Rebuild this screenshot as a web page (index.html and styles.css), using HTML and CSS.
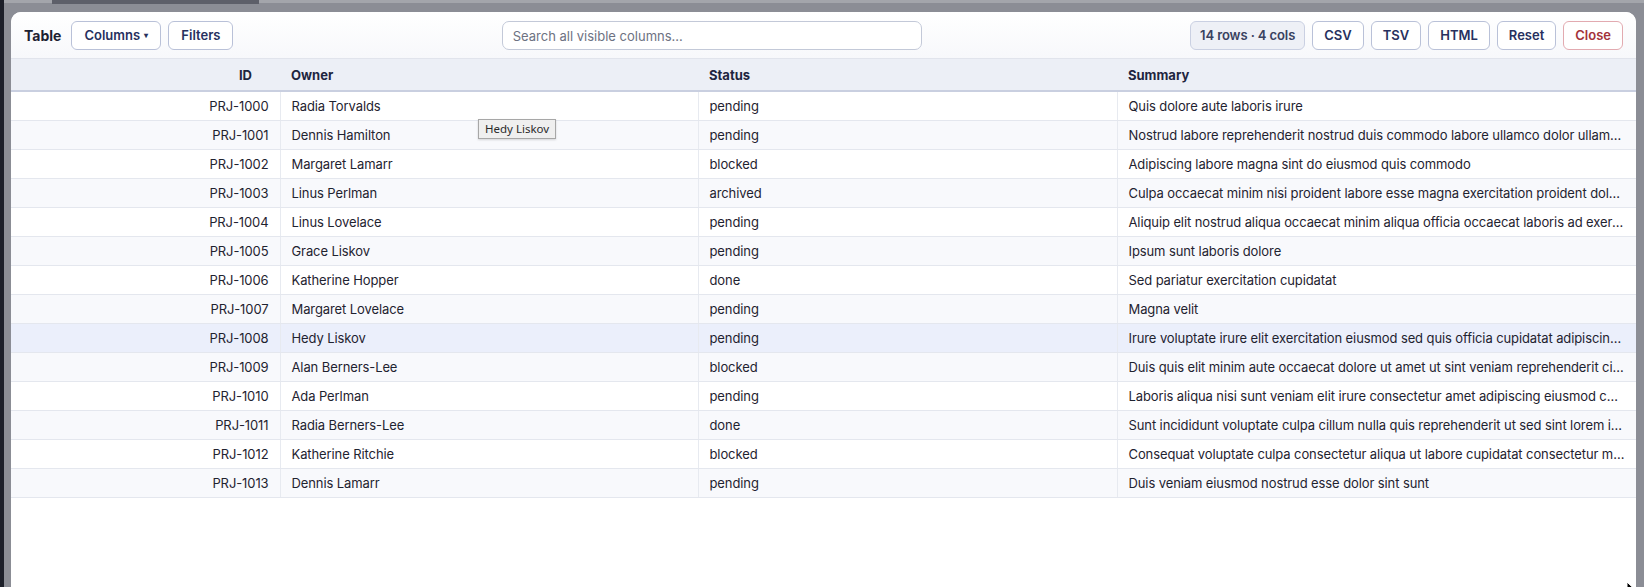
FILE: index.html
```html
<!DOCTYPE html>
<html lang="en">
<head>
<meta charset="utf-8">
<title>Table</title>
<link rel="stylesheet" href="styles.css">
</head>
<body>
<div class="topstrip"><span class="topbar"></span></div>
<div class="leftedge"></div>
<div class="modal">
  <div class="toolbar">
    <div class="group">
      <span class="title">Table</span>
      <button class="btn wide">Columns <span class="caret">▾</span></button>
      <button class="btn wide">Filters</button>
    </div>
    <div class="center">
      <input class="search" type="text" placeholder="Search all visible columns...">
    </div>
    <div class="group">
      <span class="badge">14 rows · 4 cols</span>
      <button class="btn">CSV</button>
      <button class="btn">TSV</button>
      <button class="btn">HTML</button>
      <button class="btn">Reset</button>
      <button class="btn danger">Close</button>
    </div>
  </div>
  <div class="tablewrap">
    <table class="grid">
      <colgroup>
        <col class="c-id"><col class="c-owner"><col class="c-status"><col>
      </colgroup>
      <thead>
        <tr><th class="num">ID<span class="sortspace"></span></th><th>Owner</th><th>Status</th><th>Summary</th></tr>
      </thead>
      <tbody>
        <tr><td class="num">PRJ-1000</td><td>Radia Torvalds</td><td>pending</td><td>Quis dolore aute laboris irure</td></tr>
        <tr><td class="num">PRJ-1001</td><td>Dennis Hamilton</td><td>pending</td><td>Nostrud labore reprehenderit nostrud duis commodo labore ullamco dolor ullamco sint magna</td></tr>
        <tr><td class="num">PRJ-1002</td><td>Margaret Lamarr</td><td>blocked</td><td>Adipiscing labore magna sint do eiusmod quis commodo</td></tr>
        <tr><td class="num">PRJ-1003</td><td>Linus Perlman</td><td>archived</td><td>Culpa occaecat minim nisi proident labore esse magna exercitation proident dolore anim velit</td></tr>
        <tr><td class="num">PRJ-1004</td><td>Linus Lovelace</td><td>pending</td><td>Aliquip elit nostrud aliqua occaecat minim aliqua officia occaecat laboris ad exercitation quis</td></tr>
        <tr><td class="num">PRJ-1005</td><td>Grace Liskov</td><td>pending</td><td>Ipsum sunt laboris dolore</td></tr>
        <tr><td class="num">PRJ-1006</td><td>Katherine Hopper</td><td>done</td><td>Sed pariatur exercitation cupidatat</td></tr>
        <tr><td class="num">PRJ-1007</td><td>Margaret Lovelace</td><td>pending</td><td>Magna velit</td></tr>
        <tr class="hover"><td class="num">PRJ-1008</td><td>Hedy Liskov</td><td>pending</td><td>Irure voluptate irure elit exercitation eiusmod sed quis officia cupidatat adipiscing nulla</td></tr>
        <tr><td class="num">PRJ-1009</td><td>Alan Berners-Lee</td><td>blocked</td><td>Duis quis elit minim aute occaecat dolore ut amet ut sint veniam reprehenderit cillum esse</td></tr>
        <tr><td class="num">PRJ-1010</td><td>Ada Perlman</td><td>pending</td><td>Laboris aliqua nisi sunt veniam elit irure consectetur amet adipiscing eiusmod culpa sunt</td></tr>
        <tr><td class="num">PRJ-1011</td><td>Radia Berners-Lee</td><td>done</td><td>Sunt incididunt voluptate culpa cillum nulla quis reprehenderit ut sed sint lorem ipsum dolor</td></tr>
        <tr><td class="num">PRJ-1012</td><td>Katherine Ritchie</td><td>blocked</td><td>Consequat voluptate culpa consectetur aliqua ut labore cupidatat consectetur mollit anim</td></tr>
        <tr><td class="num">PRJ-1013</td><td>Dennis Lamarr</td><td>pending</td><td>Duis veniam eiusmod nostrud esse dolor sint sunt</td></tr>
      </tbody>
    </table>
  </div>
  <div class="tooltip">Hedy Liskov</div>
</div>
<svg class="cursor" width="12" height="18" viewBox="0 0 12 18"><path d="M1 1 L1 15 L4.5 11.5 L7 17 L9 16 L6.5 10.5 L11 10.5 Z" fill="#000" stroke="#fff" stroke-width="1"/></svg>
</body>
</html>
```

FILE: styles.css
```css
* { box-sizing: border-box; }
html, body { margin: 0; height: 100%; overflow: hidden; }
body {
  background: #8b8d95;
  font-family: Inter, "Noto Sans", "Liberation Sans", sans-serif;
  color: #1f2330;
  padding: 12px 8px 0 11px;
  position: relative;
}
.topstrip {
  position: absolute;
  left: 0; top: 0; right: 0;
  height: 3px;
  background: #a3a5ab;
}
.topbar {
  position: absolute;
  left: 52px; top: 0;
  width: 207px; height: 4px;
  background: #5d5f69;
}
.leftedge {
  position: absolute;
  left: 0; top: 0; bottom: 0;
  width: 4px;
  background: #1c1f29;
}
.modal {
  position: relative;
  background: #fff;
  border-radius: 10px 10px 0 0;
  height: calc(100% + 20px);
  overflow: hidden;
}
.toolbar {
  display: flex;
  align-items: center;
  height: 47px;
  padding: 1px 13px 0 13px;
  background: linear-gradient(#ffffff, #f7f8fb);
  border-bottom: 1px solid #e1e4ec;
}
.group { display: flex; align-items: center; gap: 7px; }
.title {
  font-size: 14px;
  font-weight: 700;
  color: #1d2131;
  margin-right: 3px;
}
.btn {
  font-family: inherit;
  font-size: 13px;
  font-weight: 600;
  color: #27305e;
  background: #fff;
  border: 1px solid #b9c1d8;
  border-radius: 6px;
  height: 29px;
  padding: 0 11px;
  line-height: 27px;
}
.btn.wide { padding: 0 12px; }
.caret { font-size: 8px; vertical-align: 2px; margin-left: 1px; }
.btn.danger { color: #a3323a; border-color: #e2aab0; }
.badge {
  font-size: 13px;
  font-weight: 600;
  color: #394160;
  background: #eef0f6;
  border: 1px solid #cad0e2;
  border-radius: 6px;
  height: 29px;
  line-height: 27px;
  padding: 0 9px;
  letter-spacing: -0.1px;
}
.center { flex: 1; display: flex; justify-content: center; }
.search {
  width: 420px;
  height: 29px;
  border: 1px solid #c3c9d8;
  border-radius: 7px;
  padding: 0 10px;
  font-family: inherit;
  font-size: 13px;
  color: #1f2330;
  background: #fff;
}
.search::placeholder { color: #6d7282; }
.tablewrap { overflow: hidden; }
.grid {
  width: 100%;
  table-layout: fixed;
  border-collapse: collapse;
  font-size: 13px;
}
.c-id { width: 269px; }
.c-owner { width: 418px; }
.c-status { width: 419px; }
.grid th {
  background: #eceff6;
  font-weight: 700;
  color: #1e2540;
  text-align: left;
  height: 32px;
  padding: 0 11px;
  border-bottom: 2px solid #c9cfe0;
}
.grid th.num, .grid td.num { text-align: right; }
.sortspace { display: inline-block; width: 17px; }
.grid td {
  height: 29px;
  padding: 0 11px 0 11px;
  border-bottom: 1px solid #e4e7ee;
  border-left: 1px solid #e7eaf0;
  white-space: nowrap;
  overflow: hidden;
  text-overflow: ellipsis;
  letter-spacing: -0.1px;
}
.grid td:first-child { border-left: none; }
.grid tbody tr:nth-child(even) td { background: #f8f9fc; }
.grid tbody tr.hover td { background: #ebeffb; }
.tooltip {
  position: absolute;
  left: 467px;
  top: 107px;
  font-family: "Noto Sans", "Liberation Sans", sans-serif;
  font-size: 11.5px;
  color: #2a2a2a;
  background: #efefef;
  border: 1px solid #a7a7a7;
  box-shadow: 0 1px 2px rgba(0,0,0,0.15);
  padding: 1px 6px;
  line-height: 16px;
}
.cursor { position: absolute; left: 1626px; top: 581px; }
```
